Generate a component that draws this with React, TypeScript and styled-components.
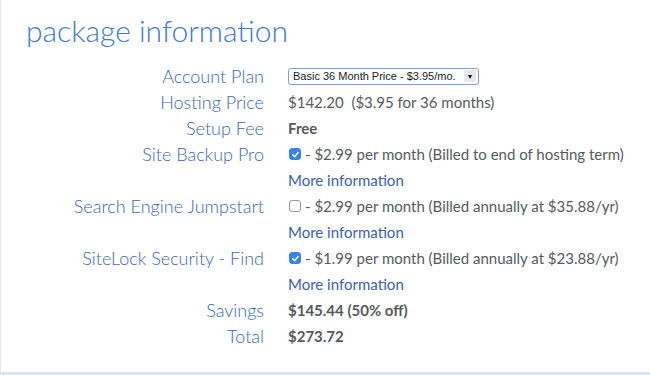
import styled, { createGlobalStyle } from 'styled-components';

const GlobalStyle = createGlobalStyle`
  html, body {
    margin: 0;
    padding: 0;
    background: #ffffff;
  }
`;

type Row = {
  label: string;
  kind: 'plain' | 'bold' | 'addon' | 'more' | 'select';
  value?: string;
  checked?: boolean;
};

const rows: Row[] = [
  { label: 'Account Plan', kind: 'select' },
  { label: 'Hosting Price', kind: 'plain', value: '$142.20  ($3.95 for 36 months)' },
  { label: 'Setup Fee', kind: 'bold', value: 'Free' },
  { label: 'Site Backup Pro', kind: 'addon', checked: true, value: '- $2.99 per month (Billed to end of hosting term)' },
  { label: '', kind: 'more' },
  { label: 'Search Engine Jumpstart', kind: 'addon', checked: false, value: '- $2.99 per month (Billed annually at $35.88/yr)' },
  { label: '', kind: 'more' },
  { label: 'SiteLock Security - Find', kind: 'addon', checked: true, value: '- $1.99 per month (Billed annually at $23.88/yr)' },
  { label: '', kind: 'more' },
  { label: 'Savings', kind: 'bold', value: '$145.44 (50% off)' },
  { label: 'Total', kind: 'bold', value: '$273.72' },
];

const CheckIcon = () => (
  <svg width="9" height="9" viewBox="0 0 10 10">
    <path d="M2 5.2 L4.2 7.4 L8 2.8" fill="none" stroke="#fff" strokeWidth="1.6" strokeLinecap="round" strokeLinejoin="round" />
  </svg>
);

export default function App() {
  return (
    <>
      <GlobalStyle />
      <Panel>
        <Heading>package information</Heading>
        <Table>
          {rows.map((r, i) => (
            <Line key={i}>
              <Label>{r.label}</Label>
              <Value $bold={r.kind === 'bold'}>
                {r.kind === 'select' && (
                  <Select>
                    <span>Basic 36 Month Price - $3.95/mo.</span>
                    <Arrow>▼</Arrow>
                  </Select>
                )}
                {r.kind === 'addon' && (
                  <>
                    <Box $checked={!!r.checked}>{r.checked && <CheckIcon />}</Box>
                    {r.value}
                  </>
                )}
                {r.kind === 'more' && <More>More information</More>}
                {(r.kind === 'plain' || r.kind === 'bold') && r.value}
              </Value>
            </Line>
          ))}
        </Table>
      </Panel>
    </>
  );
}

const Panel = styled.div`
  width: 650px;
  height: 375px;
  box-sizing: border-box;
  border-left: 1px solid #e3e6ea;
  border-bottom: 3px solid #d9e7f5;
  padding: 11px 0 0 25px;
  font-family: Lato, 'Noto Sans', sans-serif;
`;

const Heading = styled.h1`
  margin: 0 0 13px 0;
  font-weight: 300;
  font-size: 30px;
  line-height: 39px;
  color: #4479cc;
  letter-spacing: 0;
`;

const Table = styled.div`
  display: flex;
  flex-direction: column;
`;

const Line = styled.div`
  display: grid;
  grid-template-columns: 238px 1fr;
  column-gap: 24px;
  height: 26px;
  align-items: center;
`;

const Label = styled.div`
  text-align: right;
  font-size: 18px;
  font-weight: 300;
  color: #3d68ad;
  white-space: nowrap;
`;

const Value = styled.div<{ $bold: boolean }>`
  display: flex;
  align-items: center;
  font-size: 15px;
  font-weight: ${(p) => (p.$bold ? 700 : 400)};
  color: #555a60;
  white-space: pre;
`;

const Select = styled.div`
  display: flex;
  align-items: center;
  justify-content: space-between;
  box-sizing: border-box;
  width: 191px;
  height: 17px;
  padding: 0 2px 0 4px;
  border: 1px solid #7e9fd0;
  border-radius: 3px;
  font-family: 'Liberation Sans', Arial, sans-serif;
  font-size: 11px;
  font-weight: 400;
  color: #222;
  background: #fff;
`;

const Arrow = styled.span`
  display: inline-flex;
  align-items: center;
  justify-content: center;
  width: 12px;
  height: 12px;
  font-size: 7px;
  color: #111;
  background: #e8e8e8;
  border-radius: 2px;
`;

const Box = styled.span<{ $checked: boolean }>`
  display: inline-flex;
  align-items: center;
  justify-content: center;
  box-sizing: border-box;
  width: 12px;
  height: 12px;
  margin: 0 4px 0 1px;
  border-radius: 3px;
  background: ${(p) => (p.$checked ? '#3b82e6' : '#fff')};
  border: 1px solid ${(p) => (p.$checked ? '#3b82e6' : '#9a9a9a')};
`;

const More = styled.span`
  font-size: 15px;
  font-weight: 400;
  color: #3d5fa8;
`;
